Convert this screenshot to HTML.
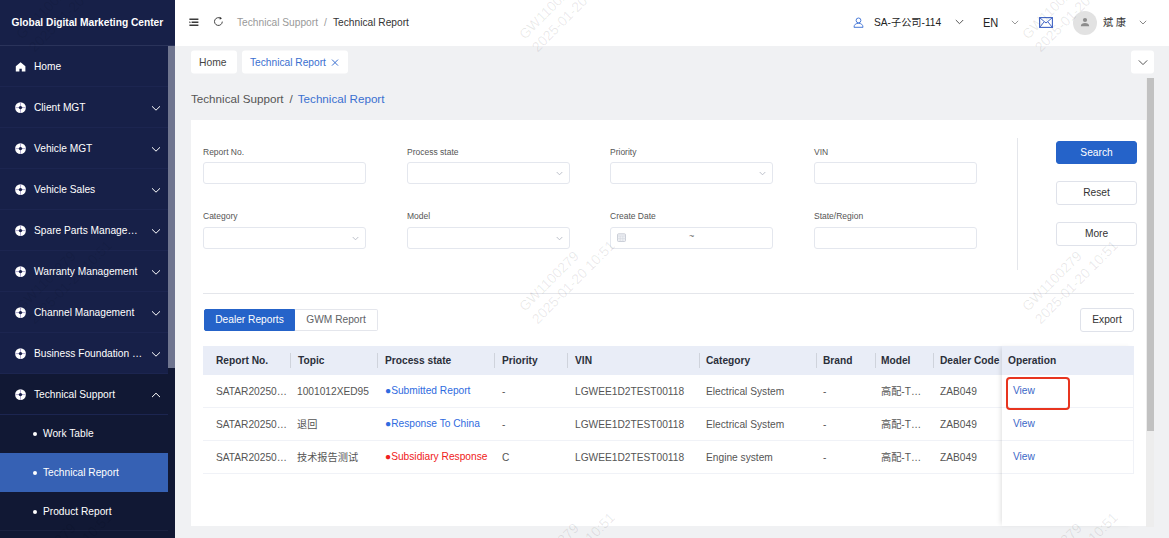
<!DOCTYPE html>
<html lang="en">
<head>
<meta charset="utf-8">
<title>Technical Report</title>
<style>
*{box-sizing:border-box;margin:0;padding:0}
html,body{width:1169px;height:538px;overflow:hidden}
body{font-family:"Liberation Sans","Noto Sans CJK SC",sans-serif;background:#f0f1f3;color:#333;position:relative;font-size:11px}
.abs{position:absolute}
/* sidebar */
#side{position:absolute;left:0;top:0;width:175px;height:538px;background:#172048;overflow:hidden}
#side .title{position:absolute;left:0;top:0;width:175px;height:45px;line-height:45px;color:#fff;font-weight:bold;font-size:10.2px;padding-left:11.5px;white-space:nowrap;border-bottom:1px solid #2a335a;height:46px}
#side .item{position:absolute;left:0;width:168px;height:41px;border-bottom:1px solid #1c2550;color:#fff;font-size:10.2px;line-height:40px;white-space:nowrap}
#side .item .txt{position:absolute;left:34px;top:1px}
#side .item svg.ic{position:absolute;left:14px;top:14px}
#side .item svg.chev{position:absolute;left:151px;top:18px}
#side .sub{position:absolute;left:0;top:374px;width:175px;height:164px;background:#111834}
#side .subitem{position:absolute;left:0;width:168px;height:39px;color:#fff;font-size:10.2px;line-height:39px;white-space:nowrap}
#side .subitem .txt{position:absolute;left:43px;top:0}
#side .subitem .dot{position:absolute;left:32.5px;top:18px;width:4px;height:4px;border-radius:50%;background:#fff}
#side .subitem.act{background:#3661b4}
#side .strack{position:absolute;left:168px;top:46px;width:7px;height:492px;background:#111834}
#side .sbar{position:absolute;left:168px;top:46px;width:7px;height:322px;background:#6f758f}
/* header */
#head{position:absolute;left:175px;top:0;width:994px;height:46px;background:#fff}
#head .t{position:absolute;white-space:nowrap;line-height:14px}
/* tabs */
.tab{position:absolute;top:0;transform:translateY(50.6px);height:22.7px;background:#fff;border-radius:3px;font-size:11px;line-height:23px;white-space:nowrap}
/* card */
#card{position:absolute;left:191px;top:120px;width:955px;height:406px;background:#fff}
.lbl{position:absolute;font-size:8.5px;color:#555;white-space:nowrap;line-height:11px}
.inp{position:absolute;width:163px;height:22px;border:1px solid #e4e7ee;border-radius:3px;background:#fff}
.btn{position:absolute;border:1px solid #dfe2ea;border-radius:3px;background:#fff;font-size:11px;text-align:center;color:#333;white-space:nowrap}
.th{position:absolute;top:347px;height:28px;line-height:27px;font-weight:bold;font-size:10.2px;color:#2b2f3a;white-space:nowrap}
.td{position:absolute;font-size:10.2px;color:#555;white-space:nowrap;line-height:14px}
.sep{position:absolute;top:353px;width:1px;height:15px;background:#cfd3dc}
.wm{position:absolute;z-index:50;color:rgba(0,0,0,.09);font-size:14px;line-height:18px;white-space:nowrap;transform:rotate(-45deg);transform-origin:0 0;pointer-events:none}
</style>
</head>
<body>

<div id="side">
  <div class="title">Global Digital Marketing Center</div>
  <div class="sub"></div>
  <div class="item" style="top:46px"><svg class="ic" width="12" height="12" viewBox="0 0 12 12" style="left:15px;top:15px"><path d="M5.6 1.2L10.4 5.3V10.5H6.8V7.7H4.4V10.5H0.8V5.3Z" fill="#fff"/></svg><span class="txt">Home</span></div>
  <div class="item" style="top:87px"><svg class="ic" width="13" height="13" viewBox="0 0 13 13"><circle cx="6.5" cy="6.6" r="5.4" fill="#fff"/><path d="M6.5 1.4V11.8M1.3 6.6H11.7" stroke="#5a4a9a" stroke-opacity=".8" stroke-width="0.6"/><circle cx="6.5" cy="6.6" r="1.7" fill="#172048"/></svg><span class="txt">Client MGT</span><svg class="chev" width="10" height="6" viewBox="0 0 10 6"><path d="M1 1.3 L5 5.2 L9 1.3" fill="none" stroke="#fff" stroke-width="1"/></svg></div>
  <div class="item" style="top:128px"><svg class="ic" width="13" height="13" viewBox="0 0 13 13"><circle cx="6.5" cy="6.6" r="5.4" fill="#fff"/><path d="M6.5 1.4V11.8M1.3 6.6H11.7" stroke="#5a4a9a" stroke-opacity=".8" stroke-width="0.6"/><circle cx="6.5" cy="6.6" r="1.7" fill="#172048"/></svg><span class="txt">Vehicle MGT</span><svg class="chev" width="10" height="6" viewBox="0 0 10 6"><path d="M1 1.3 L5 5.2 L9 1.3" fill="none" stroke="#fff" stroke-width="1"/></svg></div>
  <div class="item" style="top:169px"><svg class="ic" width="13" height="13" viewBox="0 0 13 13"><circle cx="6.5" cy="6.6" r="5.4" fill="#fff"/><path d="M6.5 1.4V11.8M1.3 6.6H11.7" stroke="#5a4a9a" stroke-opacity=".8" stroke-width="0.6"/><circle cx="6.5" cy="6.6" r="1.7" fill="#172048"/></svg><span class="txt">Vehicle Sales</span><svg class="chev" width="10" height="6" viewBox="0 0 10 6"><path d="M1 1.3 L5 5.2 L9 1.3" fill="none" stroke="#fff" stroke-width="1"/></svg></div>
  <div class="item" style="top:210px"><svg class="ic" width="13" height="13" viewBox="0 0 13 13"><circle cx="6.5" cy="6.6" r="5.4" fill="#fff"/><path d="M6.5 1.4V11.8M1.3 6.6H11.7" stroke="#5a4a9a" stroke-opacity=".8" stroke-width="0.6"/><circle cx="6.5" cy="6.6" r="1.7" fill="#172048"/></svg><span class="txt">Spare Parts Manage…</span><svg class="chev" width="10" height="6" viewBox="0 0 10 6"><path d="M1 1.3 L5 5.2 L9 1.3" fill="none" stroke="#fff" stroke-width="1"/></svg></div>
  <div class="item" style="top:251px"><svg class="ic" width="13" height="13" viewBox="0 0 13 13"><circle cx="6.5" cy="6.6" r="5.4" fill="#fff"/><path d="M6.5 1.4V11.8M1.3 6.6H11.7" stroke="#5a4a9a" stroke-opacity=".8" stroke-width="0.6"/><circle cx="6.5" cy="6.6" r="1.7" fill="#172048"/></svg><span class="txt">Warranty Management</span><svg class="chev" width="10" height="6" viewBox="0 0 10 6"><path d="M1 1.3 L5 5.2 L9 1.3" fill="none" stroke="#fff" stroke-width="1"/></svg></div>
  <div class="item" style="top:292px"><svg class="ic" width="13" height="13" viewBox="0 0 13 13"><circle cx="6.5" cy="6.6" r="5.4" fill="#fff"/><path d="M6.5 1.4V11.8M1.3 6.6H11.7" stroke="#5a4a9a" stroke-opacity=".8" stroke-width="0.6"/><circle cx="6.5" cy="6.6" r="1.7" fill="#172048"/></svg><span class="txt">Channel Management</span><svg class="chev" width="10" height="6" viewBox="0 0 10 6"><path d="M1 1.3 L5 5.2 L9 1.3" fill="none" stroke="#fff" stroke-width="1"/></svg></div>
  <div class="item" style="top:333px"><svg class="ic" width="13" height="13" viewBox="0 0 13 13"><circle cx="6.5" cy="6.6" r="5.4" fill="#fff"/><path d="M6.5 1.4V11.8M1.3 6.6H11.7" stroke="#5a4a9a" stroke-opacity=".8" stroke-width="0.6"/><circle cx="6.5" cy="6.6" r="1.7" fill="#172048"/></svg><span class="txt">Business Foundation …</span><svg class="chev" width="10" height="6" viewBox="0 0 10 6"><path d="M1 1.3 L5 5.2 L9 1.3" fill="none" stroke="#fff" stroke-width="1"/></svg></div>
  <div class="item" style="top:374px"><svg class="ic" width="13" height="13" viewBox="0 0 13 13"><circle cx="6.5" cy="6.6" r="5.4" fill="#fff"/><path d="M6.5 1.4V11.8M1.3 6.6H11.7" stroke="#5a4a9a" stroke-opacity=".8" stroke-width="0.6"/><circle cx="6.5" cy="6.6" r="1.7" fill="#172048"/></svg><span class="txt">Technical Support</span><svg class="chev" width="10" height="6" viewBox="0 0 10 6"><path d="M1 5.1 L5 1.2 L9 5.1" fill="none" stroke="#fff" stroke-width="1"/></svg></div>
  <div class="subitem" style="top:414px"><span class="dot"></span><span class="txt">Work Table</span></div>
  <div class="subitem act" style="top:453px"><span class="dot"></span><span class="txt">Technical Report</span></div>
  <div class="subitem" style="top:492px"><span class="dot"></span><span class="txt">Product Report</span></div>
  <div class="abs" style="left:0;top:530px;width:168px;height:1px;background:#1a2140"></div>
  <div class="strack"></div>
  <div class="sbar"></div>
</div>

<div id="head">
  <svg class="abs" style="left:14px;top:17.6px" width="10" height="9" viewBox="0 0 10 9"><path d="M0.4 1.2H9.4M2.6 4.2H9.4M0.4 7.2H9.4" stroke="#3a3a3a" stroke-width="1.4" fill="none"/><path d="M0.4 3.2L2 4.2L0.4 5.2Z" fill="#3a3a3a"/></svg>
  <svg class="abs" style="left:38px;top:16.4px" width="11" height="11" viewBox="0 0 11 11"><path d="M9.3 5.6A3.9 3.9 0 1 1 7.7 2.4" fill="none" stroke="#444" stroke-width="1"/><path d="M6.6 0.8L9 2.3L6.8 3.7Z" fill="#333"/></svg>
  <span class="t" style="left:62px;top:16px;font-size:10.2px;color:#999">Technical Support</span>
  <span class="t" style="left:149px;top:16px;font-size:10.2px;color:#999">/</span>
  <span class="t" style="left:158px;top:16px;font-size:10.2px;color:#333">Technical Report</span>
  <svg class="abs" style="left:678px;top:17px" width="11" height="11" viewBox="0 0 11 11"><circle cx="5.5" cy="3.4" r="2.4" fill="none" stroke="#4a7bd8" stroke-width="1"/><path d="M1 10.3C1 7.6 3 6.3 5.5 6.3S10 7.6 10 10.3Z" fill="none" stroke="#4a7bd8" stroke-width="1"/></svg>
  <span class="t" style="left:699px;top:16px;font-size:10.2px;color:#222">SA-子公司-114</span>
  <svg class="abs" style="left:780px;top:19px" width="9" height="6" viewBox="0 0 9 6"><path d="M0.8 1L4.5 4.7L8.2 1" fill="none" stroke="#555" stroke-width="1"/></svg>
  <span class="t" style="left:808px;top:15px;font-size:13px;line-height:16px;color:#222;transform:scaleX(.85);transform-origin:0 0">EN</span>
  <svg class="abs" style="left:836px;top:20px" width="8" height="5" viewBox="0 0 8 5"><path d="M0.8 0.8L4 4L7.2 0.8" fill="none" stroke="#999" stroke-width="1"/></svg>
  <svg class="abs" style="left:864px;top:17px" width="14" height="11" viewBox="0 0 14 11"><rect x="0.6" y="0.6" width="12.8" height="9.8" fill="none" stroke="#3f63c4" stroke-width="1.1"/><path d="M0.8 0.8L7 6L13.2 0.8M0.8 10.2L5 5M13.2 10.2L9 5" fill="none" stroke="#3f63c4" stroke-width="1"/></svg>
  <div class="abs" style="left:898px;top:11px;width:24px;height:24px;border-radius:50%;background:#e2e2e2"></div>
  <svg class="abs" style="left:905px;top:17px" width="10" height="10" viewBox="0 0 10 10"><circle cx="5" cy="3" r="2.1" fill="#8c8c8c"/><path d="M0.8 9.3C0.8 6.8 2.8 6 5 6S9.2 6.8 9.2 9.3Z" fill="#8c8c8c"/></svg>
  <span class="t" style="left:928px;top:16px;font-size:10.2px;color:#333;letter-spacing:2.6px">斌康</span>
  <svg class="abs" style="left:964px;top:20px" width="8" height="5" viewBox="0 0 8 5"><path d="M0.8 0.8L4 4L7.2 0.8" fill="none" stroke="#888" stroke-width="1"/></svg>
</div>

<div class="tab" style="left:191px;width:46px;padding-left:8px;color:#444;font-size:10.3px">Home</div>
<div class="tab" style="left:242px;width:106px;padding-left:8px;color:#3a6fd0;font-size:10.2px">Technical Report<svg class="abs" style="left:89px;top:8px" width="8" height="8" viewBox="0 0 8 8"><path d="M1 1L7 7M7 1L1 7" stroke="#3a6fd0" stroke-width="1" fill="none"/></svg></div>
<div class="tab" style="left:1131px;width:23px;height:23.3px"><svg class="abs" style="left:7px;top:9px" width="10" height="6" viewBox="0 0 10 6"><path d="M0.8 0.8L5 5L9.2 0.8" fill="none" stroke="#555" stroke-width="1"/></svg></div>
<div class="abs" style="left:1146px;top:78px;width:8px;height:449px;background:#ededed"></div>
<div class="abs" style="left:1146.5px;top:78px;width:7.5px;height:352.5px;background:#c1c1c1"></div>

<div class="abs" style="left:191px;top:91px;font-size:11.65px;line-height:16px;color:#555;white-space:nowrap">Technical Support<span style="margin:0 5px 0 6px">/</span><span style="color:#3a6fd0">Technical Report</span></div>

<div id="card"></div>
<div class="lbl" style="left:203px;top:147px">Report No.</div>
<div class="lbl" style="left:407px;top:147px">Process state</div>
<div class="lbl" style="left:610px;top:147px">Priority</div>
<div class="lbl" style="left:814px;top:147px">VIN</div>
<div class="lbl" style="left:203px;top:211px">Category</div>
<div class="lbl" style="left:407px;top:211px">Model</div>
<div class="lbl" style="left:610px;top:211px">Create Date</div>
<div class="lbl" style="left:814px;top:211px">State/Region</div>
<div class="inp" style="left:203px;top:162px"></div>
<div class="inp" style="left:407px;top:162px"><svg class="abs" style="left:148px;top:8px" width="7" height="5" viewBox="0 0 8 5"><path d="M0.8 0.8L4 4L7.2 0.8" fill="none" stroke="#b4b8c2" stroke-width="1"/></svg></div>
<div class="inp" style="left:610px;top:162px"><svg class="abs" style="left:148px;top:8px" width="7" height="5" viewBox="0 0 8 5"><path d="M0.8 0.8L4 4L7.2 0.8" fill="none" stroke="#b4b8c2" stroke-width="1"/></svg></div>
<div class="inp" style="left:814px;top:162px"></div>
<div class="inp" style="left:203px;top:227px"><svg class="abs" style="left:148px;top:8px" width="7" height="5" viewBox="0 0 8 5"><path d="M0.8 0.8L4 4L7.2 0.8" fill="none" stroke="#b4b8c2" stroke-width="1"/></svg></div>
<div class="inp" style="left:407px;top:227px"><svg class="abs" style="left:148px;top:8px" width="7" height="5" viewBox="0 0 8 5"><path d="M0.8 0.8L4 4L7.2 0.8" fill="none" stroke="#b4b8c2" stroke-width="1"/></svg></div>
<div class="inp" style="left:610px;top:227px"><svg class="abs" style="left:6px;top:5px" width="9" height="9" viewBox="0 0 9 9"><rect x="0.5" y="0.8" width="8" height="7.7" rx="1" fill="#eef0f4" stroke="#c6cad4" stroke-width="0.9"/><path d="M0.5 3H8.5M0.5 5.6H8.5M3.2 3V8.5M5.8 3V8.5" stroke="#d4d7df" stroke-width="0.6"/></svg><span class="abs" style="left:78px;top:2px;font-size:9px;color:#666;line-height:12px">~</span></div>
<div class="inp" style="left:814px;top:227px"></div>
<div class="abs" style="left:1017px;top:138px;width:1px;height:132px;background:#e4e6eb"></div>
<div class="btn" style="left:1056px;top:141px;width:81px;height:23px;line-height:21px;background:#2563c9;border-color:#2563c9;color:#fff;font-size:10.2px">Search</div>
<div class="btn" style="left:1056px;top:181px;width:81px;height:24px;line-height:22px;font-size:10.2px">Reset</div>
<div class="btn" style="left:1056px;top:222px;width:81px;height:24px;line-height:22px;font-size:10.2px">More</div>
<div class="abs" style="left:203px;top:293px;width:931px;height:1px;background:#e4e6eb"></div>
<div class="btn" style="left:204px;top:309px;width:91px;height:22px;line-height:20px;background:#2563c9;border-color:#2563c9;color:#fff;font-size:10.2px;border-radius:2px 0 0 2px">Dealer Reports</div>
<div class="btn" style="left:295px;top:309px;width:83px;height:22px;line-height:20px;font-size:10.2px;color:#606266;border-left:none;border-radius:0 2px 2px 0;border-color:#e4e6ec">GWM Report</div>
<div class="btn" style="left:1080px;top:308px;width:54px;height:24px;line-height:22px;font-size:10.2px">Export</div>
<div class="abs" style="left:203px;top:346px;width:931px;height:29px;background:#e9edf7"></div>
<div class="abs" style="left:203px;top:407px;width:931px;height:1px;background:#f0f2f7"></div>
<div class="abs" style="left:203px;top:440px;width:931px;height:1px;background:#f0f2f7"></div>
<div class="abs" style="left:203px;top:473px;width:931px;height:1px;background:#f0f2f7"></div>
<div class="th" style="left:216px">Report No.</div>
<div class="th" style="left:298px">Topic</div>
<div class="th" style="left:385px">Process state</div>
<div class="th" style="left:502px">Priority</div>
<div class="th" style="left:575px">VIN</div>
<div class="th" style="left:706px">Category</div>
<div class="th" style="left:823px">Brand</div>
<div class="th" style="left:881px">Model</div>
<div class="th" style="left:940px">Dealer Code</div>
<div class="sep" style="left:290px"></div>
<div class="sep" style="left:377px"></div>
<div class="sep" style="left:494px"></div>
<div class="sep" style="left:567px"></div>
<div class="sep" style="left:699px"></div>
<div class="sep" style="left:816px"></div>
<div class="sep" style="left:875px"></div>
<div class="sep" style="left:933px"></div>
<div class="td" style="left:216px;top:385px">SATAR20250…</div>
<div class="td" style="left:297px;top:385px">1001012XED95</div>
<div class="td" style="left:385px;top:384px;color:#2f6be0">●Submitted Report</div>
<div class="td" style="left:502px;top:385px">-</div>
<div class="td" style="left:575px;top:385px">LGWEE1D2TEST00118</div>
<div class="td" style="left:706px;top:385px">Electrical System</div>
<div class="td" style="left:823px;top:385px">-</div>
<div class="td" style="left:881px;top:385px">高配-T…</div>
<div class="td" style="left:940px;top:385px">ZAB049</div>
<div class="td" style="left:216px;top:418px">SATAR20250…</div>
<div class="td" style="left:297px;top:418px">退回</div>
<div class="td" style="left:385px;top:417px;color:#2f6be0">●Response To China</div>
<div class="td" style="left:502px;top:418px">-</div>
<div class="td" style="left:575px;top:418px">LGWEE1D2TEST00118</div>
<div class="td" style="left:706px;top:418px">Electrical System</div>
<div class="td" style="left:823px;top:418px">-</div>
<div class="td" style="left:881px;top:418px">高配-T…</div>
<div class="td" style="left:940px;top:418px">ZAB049</div>
<div class="td" style="left:216px;top:451px">SATAR20250…</div>
<div class="td" style="left:297px;top:451px">技术报告测试</div>
<div class="td" style="left:385px;top:450px;color:#f02020">●Subsidiary Response</div>
<div class="td" style="left:502px;top:451px">C</div>
<div class="td" style="left:575px;top:451px">LGWEE1D2TEST00118</div>
<div class="td" style="left:706px;top:451px">Engine system</div>
<div class="td" style="left:823px;top:451px">-</div>
<div class="td" style="left:881px;top:451px">高配-T…</div>
<div class="td" style="left:940px;top:451px">ZAB049</div>
<div class="abs" style="left:1002px;top:346px;width:132px;height:180px;background:#fff;box-shadow:-3px 0 5px -2px rgba(0,0,0,.13)"></div>
<div class="abs" style="left:1002px;top:346px;width:132px;height:29px;background:#e9edf7"></div>
<div class="abs" style="left:1002px;top:407px;width:132px;height:1px;background:#f0f2f7"></div>
<div class="abs" style="left:1002px;top:440px;width:132px;height:1px;background:#f0f2f7"></div>
<div class="abs" style="left:1002px;top:473px;width:132px;height:1px;background:#f0f2f7"></div>
<div class="abs" style="left:1133px;top:375px;width:1px;height:99px;background:#f0f2f7"></div>
<div class="th" style="left:1008px">Operation</div>
<div class="td" style="left:1013px;top:384px;color:#3b68c8">View</div>
<div class="td" style="left:1013px;top:417px;color:#3b68c8">View</div>
<div class="td" style="left:1013px;top:450px;color:#3b68c8">View</div>
<div class="abs" style="left:1006px;top:377px;width:64px;height:33px;border:2px solid #e8351f;border-radius:4px"></div>

<div class="wm" style="opacity:.6;left:11.7px;top:29.7px">GW1100279<br>2025-01-20 10:51</div>
<div class="wm" style="left:514.7px;top:29.7px">GW1100279<br>2025-01-20 10:51</div>
<div class="wm" style="left:1017.7px;top:29.7px">GW1100279<br>2025-01-20 10:51</div>
<div class="wm" style="opacity:.6;left:11.7px;top:301.7px">GW1100279<br>2025-01-20 10:51</div>
<div class="wm" style="left:514.7px;top:301.7px">GW1100279<br>2025-01-20 10:51</div>
<div class="wm" style="left:1017.7px;top:301.7px">GW1100279<br>2025-01-20 10:51</div>
<div class="wm" style="opacity:.6;left:11.7px;top:573.7px">GW1100279<br>2025-01-20 10:51</div>
<div class="wm" style="left:514.7px;top:573.7px">GW1100279<br>2025-01-20 10:51</div>
<div class="wm" style="left:1017.7px;top:573.7px">GW1100279<br>2025-01-20 10:51</div>

</body>
</html>
